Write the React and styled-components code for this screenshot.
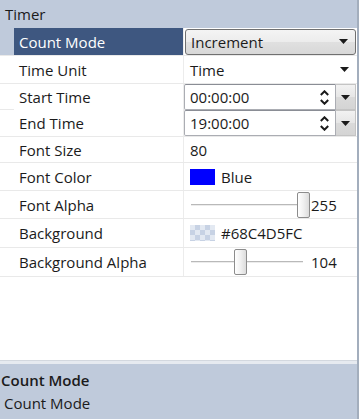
import React from 'react';
import styled, { createGlobalStyle } from 'styled-components';

const GlobalStyle = createGlobalStyle`
  html, body {
    margin: 0;
    padding: 0;
    background: #ffffff;
  }
  body {
    font-family: "Open Sans", "Noto Sans", sans-serif;
    font-size: 15px;
    color: #1b1b1b;
  }
`;

const Panel = styled.div`
  width: 357px;
  height: 419px;
  display: flex;
  flex-direction: column;
  border-right: 2px solid #a3aebd;
  background: #ffffff;
  overflow: hidden;
`;

const Category = styled.div`
  height: 27px;
  flex: none;
  display: flex;
  align-items: center;
  padding-left: 5px;
  background: #bfcadb;
  border-bottom: 1px solid #bfcadb;
`;

const Row = styled.div`
  height: ${({ $h }) => $h - 1}px;
  flex: none;
  display: grid;
  grid-template-columns: 184px 1fr;
  border-bottom: 1px solid #e9e9e9;
  background: ${({ $selected }) => ($selected ? '#bfcadb' : '#ffffff')};
`;

const Label = styled.div`
  margin-left: 14px;
  padding-left: 5px;
  display: flex;
  align-items: center;
  white-space: nowrap;
  background: ${({ $selected }) => ($selected ? '#3e5780' : '#ffffff')};
  color: ${({ $selected }) => ($selected ? '#ffffff' : '#1b1b1b')};
  border-right: 1px solid #ececec;
`;

const Value = styled.div`
  display: flex;
  align-items: center;
  padding-left: ${({ $pad }) => ($pad === undefined ? 6 : $pad)}px;
  background: #ffffff;
  min-width: 0;
`;

const Combo = styled.div`
  flex: 1;
  height: 24px;
  margin: 0 1px 0 0;
  display: flex;
  align-items: center;
  justify-content: space-between;
  padding: 0 7px 0 5px;
  border: 1px solid #707070;
  border-radius: 3px;
  background: linear-gradient(#f4f4f4, #ececec 50%, #e0e0e0 50%, #d8d8d8);
`;

const PlainDrop = styled.div`
  flex: 1;
  display: flex;
  align-items: center;
  justify-content: space-between;
  padding-right: 8px;
`;

const TimeBox = styled.div`
  flex: 1;
  height: 24px;
  display: flex;
  align-items: center;
  justify-content: space-between;
  padding: 0 6px 0 5px;
  border: 1px solid #abadb3;
  border-top-color: #8a8d95;
  border-radius: 2px 0 0 2px;
  background: #ffffff;
`;

const DropButton = styled.div`
  width: 19px;
  height: 24px;
  margin-right: 1px;
  display: flex;
  align-items: center;
  justify-content: center;
  border: 1px solid #c4c4c4;
  border-left: none;
  background: linear-gradient(#f2f2f2, #e6e6e6 50%, #dadada 50%, #d4d4d4);
`;

const Spinner = styled.div`
  display: flex;
  flex-direction: column;
  gap: 3px;
`;

const Swatch = styled.div`
  width: 25px;
  height: 16px;
  margin-right: 6px;
  background: ${({ $color }) => $color};
`;

const CheckerSwatch = styled(Swatch)`
  background-color: #e3e9f2;
  background-image:
    linear-gradient(45deg, #c7d2e4 25%, transparent 25%, transparent 75%, #c7d2e4 75%),
    linear-gradient(45deg, #c7d2e4 25%, transparent 25%, transparent 75%, #c7d2e4 75%);
  background-size: 10px 10px;
  background-position: 0 0, 5px 5px;
`;

const SliderWrap = styled.div`
  position: relative;
  width: 120px;
  height: 26px;
  margin-left: 1px;
  flex: none;
`;

const Track = styled.div`
  position: absolute;
  left: 0;
  right: ${({ $right }) => $right}px;
  top: 12px;
  height: 1px;
  background: #b9b9b9;
  border-bottom: 1px solid #ececec;
`;

const Thumb = styled.div`
  position: absolute;
  top: 0;
  width: 11px;
  height: 24px;
  border: 1px solid #8c8c8c;
  border-radius: 2px;
  background: linear-gradient(to right, #ffffff, #f0f0f0 50%, #dcdcdc);
`;

const SliderValue = styled.span`
  margin-left: ${({ $gap }) => $gap}px;
`;

const Filler = styled.div`
  flex: 1;
  background: #ffffff;
  border-bottom: 1px solid #d3d8df;
`;

const Divider = styled.div`
  height: 3px;
  flex: none;
  background: #e6eaf0;
`;

const Description = styled.div`
  height: 51px;
  flex: none;
  display: flex;
  flex-direction: column;
  padding-top: 4px;
  background: #bfcadb;
`;

const DescTitle = styled.div`
  font-weight: 600;
  line-height: 24px;
  padding-left: 1px;
`;

const DescText = styled.div`
  line-height: 22px;
  padding-left: 4px;
`;

const Arrow = () => (
  <svg width="9" height="5" viewBox="0 0 9 5">
    <path d="M0 0 H9 L4.5 5 Z" fill="#1a1a1a" />
  </svg>
);

const SpinArrows = () => (
  <Spinner>
    <svg width="9" height="6" viewBox="0 0 9 6">
      <path d="M0.8 5 L4.5 1.3 L8.2 5" fill="none" stroke="#1a1a1a" strokeWidth="2" />
    </svg>
    <svg width="9" height="6" viewBox="0 0 9 6">
      <path d="M0.8 1 L4.5 4.7 L8.2 1" fill="none" stroke="#1a1a1a" strokeWidth="2" />
    </svg>
  </Spinner>
);

const Slider = ({ value, trackRight = 0 }) => {
  const left = Math.round((value / 255) * 106);
  return (
    <SliderWrap>
      <Track $right={trackRight} />
      <Thumb style={{ left }} />
    </SliderWrap>
  );
};

const TimeEditor = ({ value }) => (
  <>
    <TimeBox>
      <span>{value}</span>
      <SpinArrows />
    </TimeBox>
    <DropButton>
      <Arrow />
    </DropButton>
  </>
);

const App = () => (
  <>
    <GlobalStyle />
    <Panel>
      <Category>Timer</Category>

      <Row $h={28} $selected>
        <Label $selected>Count Mode</Label>
        <Value $pad={1}>
          <Combo>
            <span>Increment</span>
            <Arrow />
          </Combo>
        </Value>
      </Row>

      <Row $h={28}>
        <Label>Time Unit</Label>
        <Value>
          <PlainDrop>
            <span>Time</span>
            <Arrow />
          </PlainDrop>
        </Value>
      </Row>

      <Row $h={26}>
        <Label>Start Time</Label>
        <Value $pad={0}>
          <TimeEditor value="00:00:00" />
        </Value>
      </Row>

      <Row $h={27}>
        <Label>End Time</Label>
        <Value $pad={0}>
          <TimeEditor value="19:00:00" />
        </Value>
      </Row>

      <Row $h={26}>
        <Label>Font Size</Label>
        <Value>80</Value>
      </Row>

      <Row $h={28}>
        <Label>Font Color</Label>
        <Value>
          <Swatch $color="#0000ff" />
          <span>Blue</span>
        </Value>
      </Row>

      <Row $h={28}>
        <Label>Font Alpha</Label>
        <Value>
          <Slider value={255} trackRight={8} />
          <SliderValue $gap={0}>255</SliderValue>
        </Value>
      </Row>

      <Row $h={29}>
        <Label>Background</Label>
        <Value>
          <CheckerSwatch />
          <span>#68C4D5FC</span>
        </Value>
      </Row>

      <Row $h={29}>
        <Label>Background Alpha</Label>
        <Value>
          <Slider value={104} trackRight={8} />
          <SliderValue $gap={0}>104</SliderValue>
        </Value>
      </Row>

      <Filler />
      <Divider />
      <Description>
        <DescTitle>Count Mode</DescTitle>
        <DescText>Count Mode</DescText>
      </Description>
    </Panel>
  </>
);

export default App;
